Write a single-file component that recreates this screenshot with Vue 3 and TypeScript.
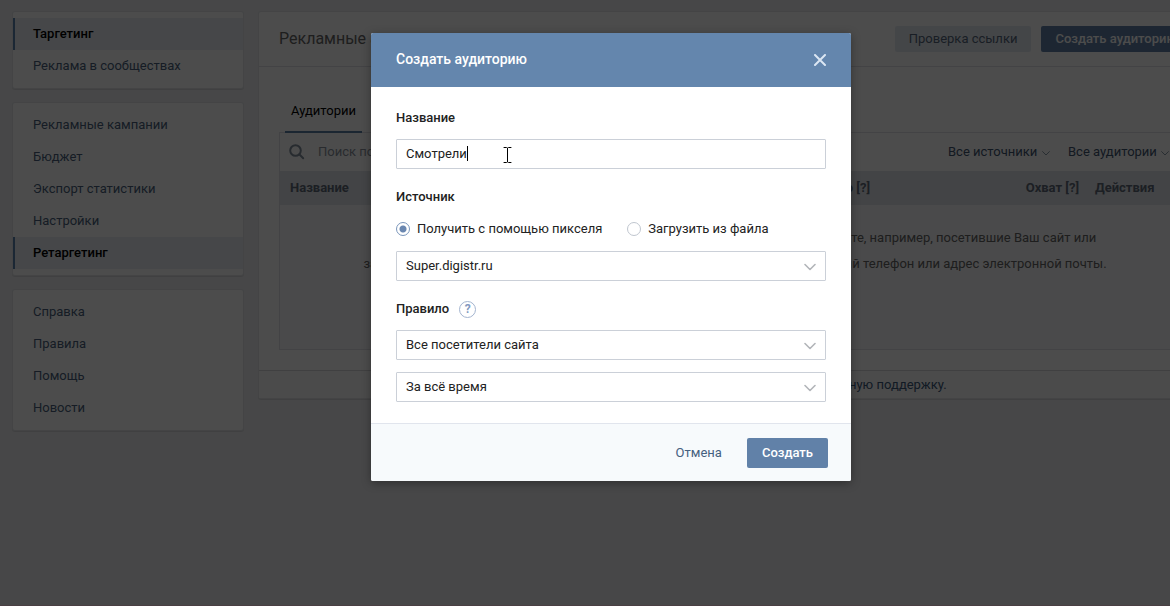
<script setup lang="ts">
import { ref } from 'vue'

interface NavItem {
  label: string
  active?: boolean
}

const navGroups: NavItem[][] = [
  [{ label: 'Таргетинг', active: true }, { label: 'Реклама в сообществах' }],
  [
    { label: 'Рекламные кампании' },
    { label: 'Бюджет' },
    { label: 'Экспорт статистики' },
    { label: 'Настройки' },
    { label: 'Ретаргетинг', active: true },
  ],
  [{ label: 'Справка' }, { label: 'Правила' }, { label: 'Помощь' }, { label: 'Новости' }],
]

const filters = ['Все источники', 'Все аудитории']

const audienceName = ref('Смотрели')
const source = ref<'pixel' | 'file'>('pixel')
const site = ref('Super.digistr.ru')
const rule = ref('Все посетители сайта')
const period = ref('За всё время')
</script>

<template>
  <div class="viewport">
    <div class="stage">
      <div class="page">
        <aside class="sidebar">
          <nav v-for="(group, i) in navGroups" :key="i" class="nav-card">
            <a
              v-for="item in group"
              :key="item.label"
              href="#"
              class="nav-link"
              :class="{ active: item.active }"
              >{{ item.label }}</a
            >
          </nav>
        </aside>

        <main class="content">
          <header class="content-head">
            <h1>Рекламные аудитории</h1>
            <button type="button" class="btn-light">Проверка ссылки</button>
            <button type="button" class="btn">Создать аудиторию</button>
          </header>

          <div class="tabs">
            <a href="#" class="tab">Аудитории</a>
          </div>

          <section class="panel">
            <div class="toolbar">
              <svg class="search-icon" width="16" height="16" viewBox="0 0 16 16" aria-hidden="true">
                <circle cx="6.5" cy="6.5" r="5.3" />
                <path d="M10.5 10.5 L14.2 14.2" />
              </svg>
              <input class="search" type="text" placeholder="Поиск по аудиториям" aria-label="Поиск по аудиториям" />
              <div v-for="f in filters" :key="f" class="filter">
                <select :aria-label="f">
                  <option>{{ f }}</option>
                </select>
                <svg width="8" height="5" viewBox="0 0 8 5" aria-hidden="true"><path d="M0.6 0.6 L4 4 L7.4 0.6" /></svg>
              </div>
            </div>
            <table class="grid">
              <thead>
                <tr>
                  <th class="c-name">Название</th>
                  <th class="c-num">Количество [?]</th>
                  <th class="c-reach">Охват [?]</th>
                  <th class="c-act">Действия</th>
                </tr>
              </thead>
              <tbody>
                <tr>
                  <td colspan="4" class="empty">
                    Здесь будут показаны созданные Вами аудитории из пользователей ВКонтакте, например, посетившие Ваш сайт или<br />
                    зарегистрированные на нём клиенты и партнёры, сообщившие свой мобильный телефон или адрес электронной почты.
                  </td>
                </tr>
              </tbody>
            </table>
          </section>

          <footer class="content-foot">
            Возникли вопросы? Вы можете обратиться в <a href="#">рекламную поддержку.</a>
          </footer>
        </main>
      </div>

      <div class="overlay">
        <form class="modal" role="dialog" aria-labelledby="modal-title" @submit.prevent>
          <header class="modal-head">
            <h2 id="modal-title">Создать аудиторию</h2>
            <button type="button" class="close" aria-label="Закрыть">
              <svg width="12" height="12" viewBox="0 0 12 12"><path d="M1 1 L11 11 M11 1 L1 11" /></svg>
            </button>
          </header>

          <div class="modal-body">
            <label class="field-label" for="name">Название</label>
            <div class="control">
              <input id="name" v-model="audienceName" type="text" class="box" />
              <span class="caret"></span>
              <svg class="pointer" width="9" height="18" viewBox="0 0 9 18" aria-hidden="true">
                <path d="M1 1.5 H3.5 L4.5 2.5 L5.5 1.5 H8 M4.5 2 V16 M1 16.5 H3.5 L4.5 15.5 L5.5 16.5 H8" />
              </svg>
            </div>

            <div id="source-label" class="field-label">Источник</div>
            <div class="radios" role="radiogroup" aria-labelledby="source-label">
              <label><input v-model="source" type="radio" name="source" value="pixel" />Получить с помощью пикселя</label>
              <label><input v-model="source" type="radio" name="source" value="file" />Загрузить из файла</label>
            </div>
            <div class="control">
              <select v-model="site" class="box" aria-label="Пиксель">
                <option>Super.digistr.ru</option>
              </select>
              <svg class="arrow" width="12" height="8" viewBox="0 0 12 8" aria-hidden="true"><path d="M1 1.5 L6 6.5 L11 1.5" /></svg>
            </div>

            <div class="rule-row">
              <label class="field-label" for="rule">Правило</label>
              <button type="button" class="help" aria-label="Подсказка">?</button>
            </div>
            <div class="control">
              <select id="rule" v-model="rule" class="box">
                <option>Все посетители сайта</option>
              </select>
              <svg class="arrow" width="12" height="8" viewBox="0 0 12 8" aria-hidden="true"><path d="M1 1.5 L6 6.5 L11 1.5" /></svg>
            </div>
            <div class="control period">
              <select v-model="period" class="box" aria-label="Период">
                <option>За всё время</option>
              </select>
              <svg class="arrow" width="12" height="8" viewBox="0 0 12 8" aria-hidden="true"><path d="M1 1.5 L6 6.5 L11 1.5" /></svg>
            </div>
          </div>

          <footer class="modal-foot">
            <button type="button" class="cancel">Отмена</button>
            <button type="submit" class="btn">Создать</button>
          </footer>
        </form>
      </div>
    </div>
  </div>
</template>

<style>
body {
  background: #484848;
}
</style>

<style scoped>
* {
  box-sizing: border-box;
}
.viewport {
  overflow: hidden;
  font-family: Roboto, 'Noto Sans', sans-serif;
  font-size: 13px;
  line-height: 16px;
  color: #222;
}
.stage {
  position: relative;
  width: calc(100% + 52px);
  min-height: 100vh;
  background: #edeef0;
  border-bottom: 1px solid #4a3f43;
}
button,
input,
select {
  font: inherit;
  color: inherit;
  margin: 0;
}
button {
  border: 0;
  padding: 0;
  background: none;
}
a {
  text-decoration: none;
  color: #3a5878;
}
svg {
  fill: none;
  stroke-linecap: round;
  stroke-linejoin: round;
}

.page {
  display: flex;
  align-items: flex-start;
  gap: 16px;
  padding: 12px 11px 0 13px;
}
.sidebar {
  flex: 0 0 230px;
  display: flex;
  flex-direction: column;
  gap: 15px;
}
.nav-card {
  padding: 6px 0;
  background: #fff;
  border-radius: 2px;
  box-shadow: 0 0 0 1px #e3e4e8, 0 1px 0 1px #d7d8db;
}
.nav-link {
  display: block;
  padding: 0 18px;
  border-left: 2px solid transparent;
  line-height: 32px;
  color: #4a5f7c;
}
.nav-link.active {
  background: #eaeef3;
  border-left-color: #5b82b0;
  color: #000;
  font-weight: 500;
}

.content {
  flex: 1;
  min-width: 0;
  background: #fff;
  border-radius: 2px;
  box-shadow: 0 0 0 1px #e3e4e8, 0 1px 0 1px #d7d8db;
}
.content-head {
  display: flex;
  align-items: center;
  gap: 10px;
  height: 55px;
  padding: 0 20px;
  border-bottom: 1px solid #e0e2e6;
}
h1 {
  flex: 1;
  margin: 0;
  font-size: 16px;
  font-weight: 400;
  color: #656565;
}
.btn,
.btn-light {
  padding: 7px 15px;
  border-radius: 2px;
}
.content-head button {
  padding: 5px 14px;
}
.btn {
  background: #6181a8;
  color: #fff;
  font-weight: 500;
}
.btn-light {
  background: #e5ebf1;
  color: #55677d;
}
.tabs {
  display: flex;
  height: 65px;
  padding: 24px 26px 0;
}
.tab {
  padding: 12px 6px 0;
  height: 42px;
  border-bottom: 2px solid #5b7fa6;
  color: #000;
}
.panel {
  margin: 0 20px;
  border: 1px solid #e0e2e6;
}
.toolbar {
  display: flex;
  align-items: center;
  height: 38px;
  padding: 0 21px 0 9px;
}
.search-icon {
  flex: none;
  stroke: #828f9e;
  stroke-width: 2;
}
.search {
  flex: 1;
  min-width: 0;
  height: 30px;
  padding: 0 13px 2px;
  border: 0;
  background: none;
}
.search::placeholder {
  color: #8a929c;
  opacity: 1;
}
.filter {
  position: relative;
  margin-left: 18px;
}
.filter select {
  appearance: none;
  border: 0;
  padding: 0 12px 0 0;
  background: none;
  color: #3f5570;
}
.filter svg {
  position: absolute;
  right: 0;
  top: 7px;
  stroke: #8b99a9;
}
.grid {
  width: 100%;
  border-collapse: collapse;
  table-layout: fixed;
}
th {
  height: 34px;
  padding: 0 8px;
  background: #dfe4ea;
  color: #5f6a78;
  font-weight: 700;
  text-align: right;
}
.c-name,
.c-act {
  text-align: left;
}
.c-name {
  padding-left: 10px;
}
.c-num,
.c-reach {
  width: 209px;
}
.c-act {
  width: 103px;
}
.empty {
  height: 144px;
  padding: 20px 0 0;
  background: #f7f8fa;
  color: #656565;
  line-height: 26px;
  text-align: center;
  vertical-align: top;
  white-space: nowrap;
}
.content-foot {
  margin-top: 20px;
  padding: 6px 20px 5px;
  border-top: 1px solid #d7d8db;
  background: #fafbfc;
  color: #656565;
  text-align: center;
}

.overlay {
  position: absolute;
  inset: 0;
  padding-top: 33px;
  background: rgba(0, 0, 0, 0.7);
}
.modal {
  width: 480px;
  margin: 0 auto;
  overflow: hidden;
  border-radius: 2px;
  background: #fff;
  box-shadow: 0 2px 10px rgba(0, 0, 0, 0.35);
}
.modal-head {
  display: flex;
  align-items: center;
  justify-content: space-between;
  height: 54px;
  padding: 0 25px;
  background: #6486ad;
  color: #fff;
}
h2 {
  margin: 0;
  padding-bottom: 2px;
  font-size: 14px;
  font-weight: 500;
}
.close {
  display: flex;
  stroke: #dbe6f3;
  stroke-width: 2;
}
.modal-body {
  padding: 23px 25px 21px;
}
.field-label {
  display: block;
  font-weight: 500;
}
.control {
  position: relative;
  margin-top: 13px;
}
.control + .field-label {
  margin-top: 20px;
}
.box {
  display: block;
  width: 100%;
  height: 30px;
  padding: 0 9px;
  border: 1px solid #cbd0d8;
  border-radius: 1px;
  background: #fff;
  appearance: none;
  outline: 0;
}
input.box {
  padding-bottom: 2px;
}
.caret {
  position: absolute;
  left: 71px;
  top: 7px;
  width: 1px;
  height: 15px;
  background: #000;
}
.pointer {
  position: absolute;
  left: 107px;
  top: 7px;
  stroke: #000;
}
.arrow {
  position: absolute;
  right: 10px;
  top: 12px;
  stroke: #b2b5b9;
  stroke-width: 1.6;
}
.radios {
  display: flex;
  gap: 25px;
  margin-top: 16px;
}
.radios label {
  display: flex;
  align-items: center;
  gap: 7px;
}
.radios input {
  appearance: none;
  width: 14px;
  height: 14px;
  border: 1px solid #c0c6cf;
  border-radius: 50%;
}
.radios input:checked {
  border-color: #7a96bb;
  background: radial-gradient(circle, #6a87b0 3px, #fff 4px);
}
.radios + .control {
  margin-top: 14px;
}
.rule-row {
  display: flex;
  align-items: flex-start;
  gap: 10px;
  margin-top: 20px;
}
.rule-row + .control {
  margin-top: 12px;
}
.help {
  width: 17px;
  height: 17px;
  border: 1px solid #a3b4cf;
  border-radius: 50%;
  color: #8299bf;
  font-size: 12px;
  font-weight: 700;
  line-height: 15px;
}
.period {
  margin-top: 12px;
}
.modal-foot {
  display: flex;
  align-items: center;
  justify-content: flex-end;
  gap: 25px;
  height: 58px;
  padding: 0 23px;
  border-top: 1px solid #e1e5ed;
  background: #f7fafc;
}
.cancel {
  color: #45607f;
}
</style>
